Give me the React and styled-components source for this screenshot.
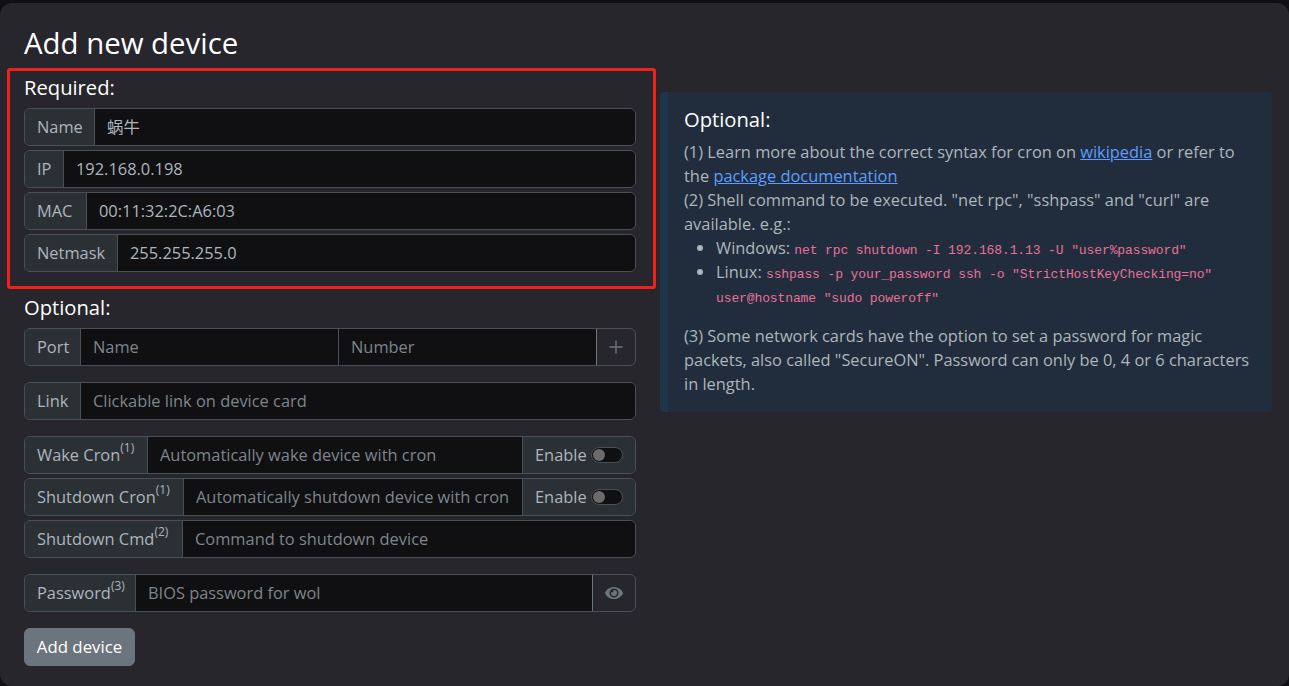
import styled, { createGlobalStyle } from 'styled-components';
import { FaEye } from 'react-icons/fa';

const sans = `"Open Sans", "Noto Sans CJK SC", sans-serif`;

const GlobalStyle = createGlobalStyle`
  html, body {
    margin: 0;
    height: 100%;
    background: #101014;
    overflow: hidden;
  }
  * { box-sizing: border-box; }
`;

export default function App() {
  return (
    <>
      <GlobalStyle />
      <Card>
        <Title>Add new device</Title>
        <Columns>
          <FormColumn>
            <RequiredBox>
              <SectionLabel>Required:</SectionLabel>
              <Stack>
                <Group>
                  <Addon $width={70}>Name</Addon>
                  <Field defaultValue="蜗牛" />
                </Group>
                <Group>
                  <Addon $width={39}>IP</Addon>
                  <Field defaultValue="192.168.0.198" />
                </Group>
                <Group>
                  <Addon $width={62}>MAC</Addon>
                  <Field defaultValue="00:11:32:2C:A6:03" />
                </Group>
                <Group>
                  <Addon $width={93}>Netmask</Addon>
                  <Field defaultValue="255.255.255.0" />
                </Group>
              </Stack>
            </RequiredBox>

            <SectionLabel>Optional:</SectionLabel>
            <Blocks>
              <Group>
                <Addon $width={56}>Port</Addon>
                <Field placeholder="Name" />
                <Field placeholder="Number" />
                <IconButton $width={39}>
                  <PlusIcon viewBox="0 0 16 16">
                    <path d="M8 1.5v13M1.5 8h13" />
                  </PlusIcon>
                </IconButton>
              </Group>

              <Group>
                <Addon $width={56}>Link</Addon>
                <Field placeholder="Clickable link on device card" />
              </Group>

              <Stack>
                <Group>
                  <Addon $width={123}>Wake Cron<Sup>(1)</Sup></Addon>
                  <Field placeholder="Automatically wake device with cron" />
                  <Addon $width={113}>
                    Enable
                    <Switch />
                  </Addon>
                </Group>
                <Group>
                  <Addon $width={159}>Shutdown Cron<Sup>(1)</Sup></Addon>
                  <Field placeholder="Automatically shutdown device with cron" />
                  <Addon $width={113}>
                    Enable
                    <Switch />
                  </Addon>
                </Group>
                <Group>
                  <Addon $width={158}>Shutdown Cmd<Sup>(2)</Sup></Addon>
                  <Field placeholder="Command to shutdown device" />
                </Group>
              </Stack>

              <Group>
                <Addon $width={111}>Password<Sup>(3)</Sup></Addon>
                <Field placeholder="BIOS password for wol" />
                <IconButton $width={43}>
                  <FaEye size={18} />
                </IconButton>
              </Group>

              <AddButton>Add device</AddButton>
            </Blocks>
          </FormColumn>

          <Info>
            <InfoTitle>Optional:</InfoTitle>
            <InfoText>
              (1) Learn more about the correct syntax for cron on <a href="#wikipedia">wikipedia</a> or refer to the{' '}
              <a href="#docs">package documentation</a>
              <br />
              (2) Shell command to be executed. "net rpc", "sshpass" and "curl" are available. e.g.:
            </InfoText>
            <InfoList>
              <li>
                Windows: <Code>net rpc shutdown -I 192.168.1.13 -U "user%password"</Code>
              </li>
              <li>
                Linux: <Code>sshpass -p your_password ssh -o "StrictHostKeyChecking=no" user@hostname "sudo poweroff"</Code>
              </li>
            </InfoList>
            <InfoText>
              (3) Some network cards have the option to set a password for magic packets, also called "SecureON". Password
              can only be 0, 4 or 6 characters in length.
            </InfoText>
          </Info>
        </Columns>
      </Card>
    </>
  );
}

const Card = styled.main`
  margin-top: 3px;
  height: 683px;
  padding: 20px 17px 20px 24px;
  border-radius: 12px;
  background: #26262c;
  font-family: ${sans};
  font-size: 16.4px;
  line-height: 24px;
  color: #adb5bd;
`;

const Title = styled.h1`
  margin: 0 0 7px;
  font-size: 29.4px;
  font-weight: 400;
  line-height: 40px;
  color: #ffffff;
`;

const Columns = styled.div`
  display: grid;
  grid-template-columns: 612px 612px;
  gap: 24px;
  align-items: start;
`;

const FormColumn = styled.div`
  display: flex;
  flex-direction: column;
`;

const RequiredBox = styled.section`
  margin: -2px -20px 7px -17px;
  height: 221px;
  padding: 5px 17px 0 14px;
  border: 3px solid #f0201a;
  border-radius: 3px;
`;

const SectionLabel = styled.h2`
  margin: 0 0 10px;
  font-size: 20.2px;
  font-weight: 500;
  line-height: 22px;
  color: #ffffff;
`;

const Stack = styled.div`
  display: flex;
  flex-direction: column;
  gap: 4px;
`;

const Blocks = styled.div`
  display: flex;
  flex-direction: column;
  align-items: stretch;
  gap: 16px;
`;

const Group = styled.div`
  display: flex;
  height: 38px;
  border: 1px solid #495057;
  border-radius: 6px;
  overflow: hidden;
`;

const Addon = styled.div`
  display: flex;
  align-items: center;
  flex: none;
  width: ${(props) => props.$width}px;
  padding: 0 0 0 12px;
  background: #2b3035;
  white-space: nowrap;
  border-right: 1px solid #495057;

  &:not(:first-child) {
    border-right: 0;
    border-left: 1px solid #495057;
  }
`;

const Sup = styled.sup`
  align-self: flex-start;
  margin-top: 3px;
  font-size: 12px;
  line-height: 16px;
`;

const Field = styled.input`
  flex: 1 1 0;
  min-width: 0;
  height: 100%;
  padding: 0 12px 2px;
  border: 0;
  outline: 0;
  background: #101012;
  font: inherit;
  color: #adb5bd;

  & + & {
    border-left: 1px solid #495057;
  }

  &::placeholder {
    color: #7f858b;
    opacity: 1;
  }
`;

const IconButton = styled.button`
  display: flex;
  align-items: center;
  justify-content: center;
  flex: none;
  width: ${(props) => props.$width}px;
  padding: 0;
  border: 0;
  border-left: 1px solid #6c757d;
  background: transparent;
  color: #6c757d;
`;

const PlusIcon = styled.svg`
  width: 16px;
  height: 16px;
  fill: none;
  stroke: currentColor;
  stroke-width: 1.4;
`;

const Switch = styled.span`
  position: relative;
  display: block;
  width: 32px;
  height: 16px;
  margin-left: 4px;
  border: 1px solid #495057;
  border-radius: 8px;
  background: #101012;

  &::after {
    content: '';
    position: absolute;
    left: 1px;
    top: 1px;
    width: 12px;
    height: 12px;
    border-radius: 50%;
    background: #6b6b6b;
  }
`;

const AddButton = styled.button`
  align-self: flex-start;
  width: 111px;
  height: 38px;
  padding: 0;
  border: 1px solid #6c757d;
  border-radius: 6px;
  background: #6c757d;
  font: inherit;
  font-size: 16.8px;
  color: #ffffff;
`;

const Info = styled.aside`
  margin-top: 22px;
  padding: 16px;
  border-left: 8px solid #1f3549;
  border-radius: 4px;
  background: #212d3c;

  a {
    color: #5c9dff;
  }
`;

const InfoTitle = styled.h2`
  margin: 0 0 10px;
  font-size: 20.2px;
  font-weight: 500;
  line-height: 22px;
  color: #ffffff;
`;

const InfoText = styled.p`
  margin: 0;
`;

const InfoList = styled.ul`
  margin: 0 0 16px;
  padding-left: 32px;
`;

const Code = styled.code`
  font-family: "Liberation Mono", monospace;
  font-size: 13px;
  line-height: 1;
  letter-spacing: -0.11px;
  color: #e8709a;
  overflow-wrap: break-word;
`;
